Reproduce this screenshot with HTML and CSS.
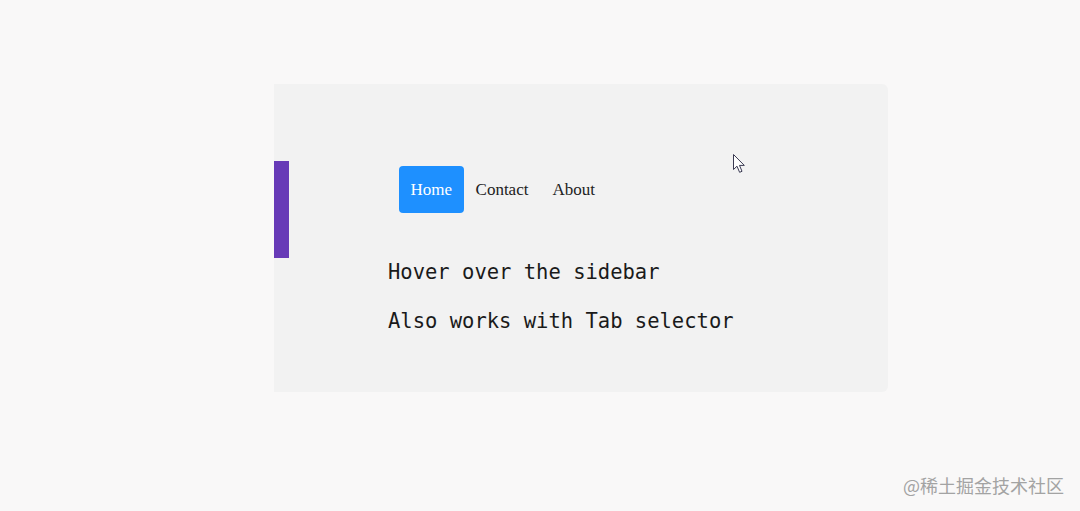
FILE: index.html
```html
<!DOCTYPE html>
<html lang="en">
<head>
<meta charset="utf-8">
<title>Sidebar demo</title>
<link rel="stylesheet" href="styles.css">
</head>
<body>
<div class="card">
  <aside class="sidebar"></aside>
  <main class="content">
    <nav class="tabs">
      <a class="tab active">Home</a>
      <a class="tab">Contact</a>
      <a class="tab">About</a>
    </nav>
    <p class="line">Hover over the sidebar</p>
    <p class="line">Also works with Tab selector</p>
  </main>
</div>
<svg class="cursor" width="13" height="20" viewBox="0 0 13 20">
  <path d="M0.5 0.5 L0.5 15.5 L4 12.2 L6.6 18.3 L9 17.3 L6.5 11.4 L11.3 11.4 Z" fill="#ffffff" stroke="#3a3a52" stroke-width="1" stroke-linejoin="round"/>
</svg>
<div class="watermark">@稀土掘金技术社区</div>
</body>
</html>
```

FILE: styles.css
```css
html, body {
  margin: 0;
  padding: 0;
}
body {
  background: #f9f8f8;
  width: 1080px;
  height: 511px;
  overflow: hidden;
  position: relative;
}
.card {
  margin: 84px 0 0 274px;
  width: 614px;
  height: 308px;
  background: #f2f2f2;
  border-radius: 0 6px 6px 0;
  display: flex;
  align-items: flex-start;
}
.sidebar {
  width: 15px;
  height: 97px;
  margin-top: 77px;
  background: #673ab7;
  flex: none;
}
.content {
  margin-left: 99px;
  padding-top: 82px;
}
.tabs {
  display: flex;
  margin-left: 11px;
  margin-bottom: 47px;
}
.tab {
  font-family: "Liberation Serif", "Times New Roman", serif;
  font-size: 17px;
  line-height: 19px;
  padding: 14px 12px;
  color: #222;
  border-radius: 4px;
}
.tab.active {
  background: #1e90ff;
  color: #fff;
  padding: 14px 11.5px;
}
.line {
  font-family: "DejaVu Sans Mono", "Liberation Mono", monospace;
  font-size: 20.5px;
  line-height: 24px;
  color: #1a1a1a;
  margin: 0 0 25px 0;
}
.cursor {
  position: absolute;
  left: 733px;
  top: 154px;
}
.watermark {
  position: absolute;
  left: 903px;
  top: 473px;
  font-family: "Noto Sans CJK SC", "Noto Sans", sans-serif;
  font-size: 18px;
  line-height: 24px;
  color: #a3a3a3;
}
```
